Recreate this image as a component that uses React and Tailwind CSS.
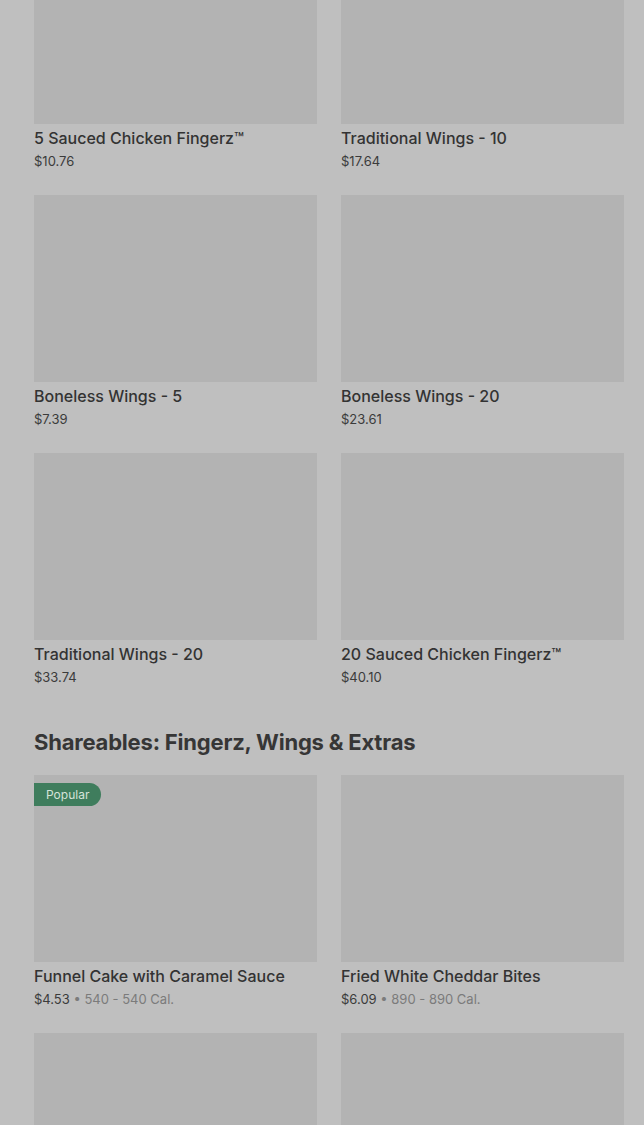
const grupAtas = [
  { nama: '5 Sauced Chicken Fingerz™', harga: '$10.76' },
  { nama: 'Traditional Wings - 10', harga: '$17.64' },
  { nama: 'Boneless Wings - 5', harga: '$7.39' },
  { nama: 'Boneless Wings - 20', harga: '$23.61' },
  { nama: 'Traditional Wings - 20', harga: '$33.74' },
  { nama: '20 Sauced Chicken Fingerz™', harga: '$40.10' },
]

const shareables = [
  { nama: 'Funnel Cake with Caramel Sauce', harga: '$4.53', kal: '540 - 540 Cal.', populer: true },
  { nama: 'Fried White Cheddar Bites', harga: '$6.09', kal: '890 - 890 Cal.' },
  { nama: '', harga: '' },
  { nama: '', harga: '' },
]

// satu kartu menu: gambar kosong + nama + harga
function Kartu({ item }) {
  return (
    <div className="h-[258px]">
      <div className="relative h-[187px] bg-[#b3b3b3]">
        {item.populer && (
          <span className="absolute left-0 top-2 h-[23px] pl-3 pr-3 flex items-center bg-[#3f7d5d] text-[#d5e3d9] text-[12px] rounded-r-full">
            Popular
          </span>
        )}
      </div>
      {item.nama && (
        <>
          <p className="mt-[3px] text-[16px] leading-[22px] font-medium text-[#333333] truncate">
            {item.nama}
          </p>
          <p className="mt-px text-[13px] leading-[22px] text-[#3b3b3b]">
            {item.harga}
            {item.kal && <span className="text-[#7b7b7b]"> • {item.kal}</span>}
          </p>
        </>
      )}
    </div>
  )
}

export default function App() {
  return (
    <div className="h-[1125px] overflow-hidden bg-[#bfbfbf] pl-[34px] pr-[20px]" style={{ fontFamily: 'Inter, "Noto Sans", sans-serif' }}>
      <div className="-mt-[63px] grid grid-cols-2 gap-x-6">
        {grupAtas.map((it, i) => (
          <Kartu key={i} item={it} />
        ))}
      </div>
      <h2 className="mt-[16px] mb-[18px] text-[22px] leading-[30px] font-bold text-[#363636] tracking-[-0.2px]">
        Shareables: Fingerz, Wings &amp; Extras
      </h2>
      <div className="grid grid-cols-2 gap-x-6">
        {shareables.map((it, i) => (
          <Kartu key={i} item={it} />
        ))}
      </div>
    </div>
  )
}
